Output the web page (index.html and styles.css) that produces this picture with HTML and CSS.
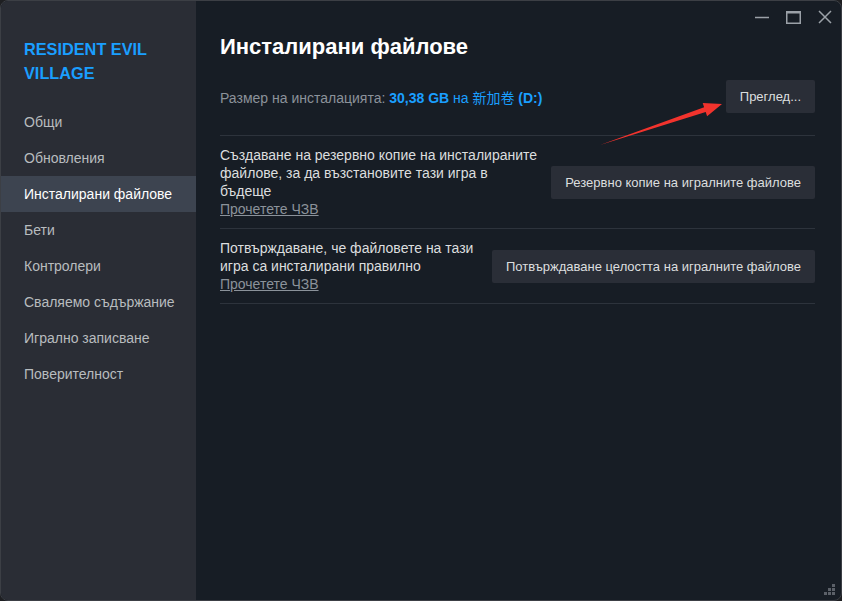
FILE: index.html
```html
<!DOCTYPE html>
<html lang="bg">
<head>
  <meta charset="UTF-8">
  <title>Свойства – Resident Evil Village</title>
  <link rel="stylesheet" href="styles.css">
</head>
<body>

<div class="window">
  <nav class="sidebar">
    <div class="game-title">RESIDENT EVIL VILLAGE</div>
    <div class="nav-item">Общи</div>
    <div class="nav-item">Обновления</div>
    <div class="nav-item active">Инсталирани файлове</div>
    <div class="nav-item">Бети</div>
    <div class="nav-item">Контролери</div>
    <div class="nav-item">Сваляемо съдържание</div>
    <div class="nav-item">Игрално записване</div>
    <div class="nav-item">Поверителност</div>
  </nav>

  <main class="main">
    <div class="titlebar">
      <button class="win-btn" title="Минимизиране">
        <svg width="32" height="32" viewBox="0 0 32 32"><line x1="10" y1="16.5" x2="24" y2="16.5" stroke="currentColor" stroke-width="1.5"/></svg>
      </button>
      <button class="win-btn" title="Максимизиране">
        <svg width="32" height="32" viewBox="0 0 32 32"><rect x="9.75" y="10.75" width="13.5" height="11.5" fill="none" stroke="currentColor" stroke-width="1.5"/><line x1="9" y1="11.5" x2="24" y2="11.5" stroke="currentColor" stroke-width="2"/></svg>
      </button>
      <button class="win-btn" title="Затваряне">
        <svg width="32" height="32" viewBox="0 0 32 32"><path d="M10 10 L22 22 M22 10 L10 22" stroke="currentColor" stroke-width="1.5"/></svg>
      </button>
    </div>

    <div class="content">
      <h1>Инсталирани файлове</h1>

      <div class="size-row">
        <div class="size-info">
          Размер на инсталацията: <span class="size-value"><b>30,38 GB</b> на 新加卷 <b>(D:)</b></span>
        </div>
        <button class="btn">Преглед...</button>
      </div>

      <div class="option-row">
        <div class="option-text">
          Създаване на резервно копие на инсталираните файлове, за да възстановите тази игра в бъдеще
          <a class="faq" href="#">Прочетете ЧЗВ</a>
        </div>
        <button class="btn">Резервно копие на игралните файлове</button>
      </div>

      <div class="option-row">
        <div class="option-text">
          Потвърждаване, че файловете на тази игра са инсталирани правилно
          <a class="faq" href="#">Прочетете ЧЗВ</a>
        </div>
        <button class="btn">Потвърждаване целостта на игралните файлове</button>
      </div>
    </div>

    <div class="grip">
      <svg width="12" height="12" viewBox="0 0 12 12" fill="#5b6068">
        <rect x="9" y="0" width="3" height="3"/>
        <rect x="5" y="4" width="3" height="3"/><rect x="9" y="4" width="3" height="3"/>
        <rect x="1" y="8" width="3" height="3"/><rect x="5" y="8" width="3" height="3"/><rect x="9" y="8" width="3" height="3"/>
      </svg>
    </div>
  </main>

  <!-- red pointer onto the browse button -->
  <svg class="pointer" width="842" height="601" viewBox="0 0 842 601">
    <polygon points="600,145 704.1,107.3 702.7,103.1 722,104 707.1,116.3 705.7,112.1" fill="#f2332d"/>
  </svg>
</div>

</body>
</html>
```

FILE: styles.css
```css
:root {
  --bg-side: #2a2d35;
  --bg-main: #171d25;
  --bg-active: #3d4450;
  --bg-btn: #2a2e37;
  --line: #2d333c;
  --text: #dcdedf;
  --muted: #8b929a;
  --accent: #1a9fff;
}

html, body {
  margin: 0;
  height: 100%;
}

body {
  background: #1e1f22;
  font-family: 'Liberation Sans', Arial, 'Noto Sans CJK SC', sans-serif;
  font-size: 14px;
  color: var(--text);
}

.window {
  position: relative;
  box-sizing: border-box;
  height: 100vh;
  display: flex;
  border: 1px solid #3c3f45;
  border-radius: 8px;
  overflow: hidden;
  background: var(--bg-main);
}

.sidebar {
  width: 195px;
  flex-shrink: 0;
  background: var(--bg-side);
  padding-top: 36px;
}

.game-title {
  padding: 0 40px 0 23px;
  font-size: 16.3px;
  font-weight: bold;
  line-height: 24px;
  color: var(--accent);
  margin-bottom: 19px;
}

.nav-item {
  height: 36px;
  line-height: 36px;
  padding-left: 23px;
  color: #b8bcbf;
  white-space: nowrap;
}

.nav-item.active {
  background: var(--bg-active);
  color: #fff;
}

.main {
  position: relative;
  flex-grow: 1;
}

.titlebar {
  display: flex;
  justify-content: flex-end;
  height: 32px;
}

.win-btn {
  width: 32px;
  height: 32px;
  padding: 0;
  border: none;
  background: none;
  color: #9ba1a8;
}

.win-btn svg {
  display: block;
}

.content {
  padding: 0 26px 0 24px;
}

h1 {
  margin: 0 0 19px;
  font-size: 22px;
  line-height: 28px;
  font-weight: bold;
  color: #fff;
}

.size-row {
  display: flex;
  justify-content: space-between;
  align-items: center;
  padding-bottom: 22px;
  border-bottom: 1px solid var(--line);
}

.size-info {
  color: var(--muted);
}

.size-value {
  color: var(--accent);
}

.btn {
  height: 33px;
  padding: 0 14px;
  border: none;
  border-radius: 2px;
  background: var(--bg-btn);
  color: var(--text);
  font-family: inherit;
  font-size: 13px;
  white-space: nowrap;
}

.option-row {
  display: flex;
  align-items: center;
  gap: 12px;
  padding: 10px 0;
  border-bottom: 1px solid var(--line);
  line-height: 18px;
}

.option-text {
  flex: 1;
}

.faq {
  display: block;
  color: var(--muted);
  text-decoration: underline;
}

.grip {
  position: absolute;
  right: 6px;
  bottom: 4px;
}

.grip svg {
  display: block;
}

.pointer {
  position: absolute;
  left: -1px;
  top: -1px;
  pointer-events: none;
}
```
